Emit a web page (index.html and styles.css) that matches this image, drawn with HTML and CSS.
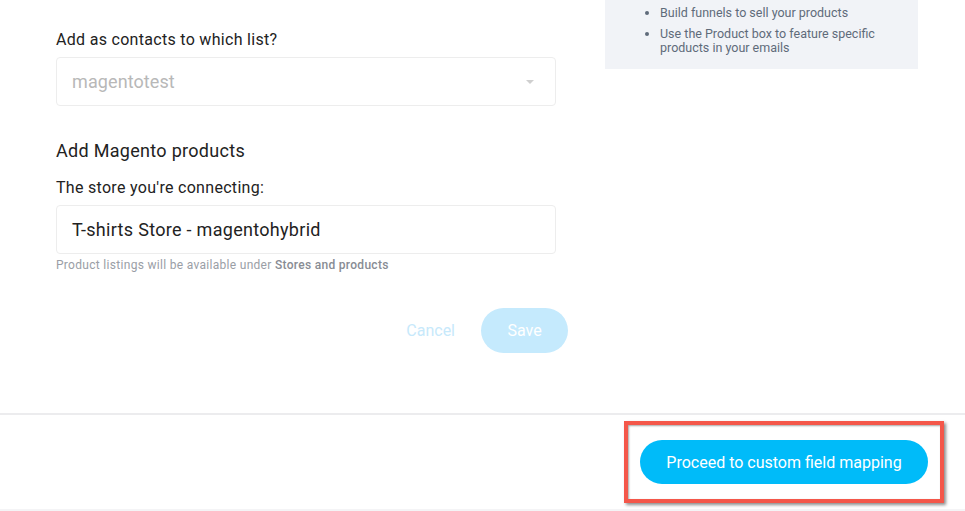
FILE: index.html
```html
<!DOCTYPE html>
<html lang="en">
<head>
<meta charset="UTF-8">
<title>Magento integration</title>
<link rel="stylesheet" href="styles.css">
</head>
<body>
<div class="page">
    <div class="main">
        <div class="form-col">
            <label class="field-label">Add as contacts to which list?</label>
            <div class="select-box">
                <span class="select-value">magentotest</span>
                <span class="caret"></span>
            </div>

            <h3 class="section-title">Add Magento products</h3>
            <label class="field-label">The store you're connecting:</label>
            <div class="input-box">T-shirts Store - magentohybrid</div>
            <p class="hint">Product listings will be available under <b>Stores and products</b></p>

            <div class="actions">
                <button class="btn-cancel">Cancel</button>
                <button class="btn-save">Save</button>
            </div>
        </div>

        <div class="side-col">
            <div class="info-box">
                <ul>
                    <li>Build funnels to sell your products</li>
                    <li>Use the Product box to feature specific products in your emails</li>
                </ul>
            </div>
        </div>
    </div>

    <div class="footer">
        <div class="highlight">
            <button class="btn-proceed">Proceed to custom field mapping</button>
        </div>
    </div>
</div>
</body>
</html>
```

FILE: styles.css
```css
body {
    margin: 0;
    padding: 0;
    font-family: Roboto, 'Liberation Sans', sans-serif;
    background-color: #fff;
    color: #222;
}

.page {
    height: 511px;
    display: flex;
    flex-direction: column;
    border-bottom: 2px solid #f4f4f6;
    box-sizing: border-box;
}

.main {
    display: flex;
    height: 413px;
    border-bottom: 2px solid #ececee;
}

.form-col {
    width: 500px;
    margin-left: 56px;
    padding-top: 31px;
    letter-spacing: 0.3px;
}

.field-label {
    display: block;
    font-size: 16px;
    line-height: 18px;
    margin-bottom: 8px;
    color: #222;
}

.select-box,
.input-box {
    height: 49px;
    border: 1px solid #ededed;
    border-radius: 4px;
    box-sizing: border-box;
    display: flex;
    align-items: center;
    padding: 0 15px;
    font-size: 18px;
}

.select-box {
    justify-content: space-between;
}

.select-value {
    color: #b8b8b8;
    letter-spacing: 0.1px;
}

.caret {
    width: 0;
    height: 0;
    border-left: 4px solid transparent;
    border-right: 4px solid transparent;
    border-top: 4px solid #cfcfcf;
    margin-right: 6px;
}

.section-title {
    font-size: 18px;
    font-weight: 400;
    line-height: 22px;
    margin: 34px 0 17px;
    color: #222;
}

.input-box {
    color: #222;
}

.hint {
    font-size: 12px;
    color: #9a9ea6;
    margin: 4px 0 0;
    line-height: 14px;
}

.hint b {
    font-weight: 500;
    color: #888c94;
}

.actions {
    display: flex;
    justify-content: flex-end;
    align-items: center;
    margin-top: 36px;
    margin-right: -12px;
    gap: 26px;
    letter-spacing: 0;
}

.btn-cancel {
    background: none;
    border: none;
    font-family: inherit;
    font-size: 16px;
    color: #c7e9fb;
    padding: 0;
}

.btn-save {
    width: 87px;
    height: 45px;
    border: none;
    border-radius: 23px;
    background-color: #c5eafd;
    color: #fff;
    font-family: inherit;
    font-size: 16px;
}

.side-col {
    margin-left: 49px;
}

.info-box {
    width: 313px;
    height: 69px;
    background-color: #f1f3f7;
    box-sizing: border-box;
    padding-top: 6px;
}

.info-box ul {
    margin: 0;
    padding-left: 55px;
    font-size: 12.5px;
    line-height: 14px;
    color: #5f6b7a;
}

.info-box li {
    margin-bottom: 7px;
    padding-right: 40px;
}

.footer {
    display: flex;
    justify-content: flex-end;
    padding-top: 6px;
    padding-right: 21px;
}

.highlight {
    border: 4px solid #f4574a;
    padding: 15px 12px;
    background: #fff;
    box-shadow: 2px 2px 3px rgba(0, 0, 0, 0.45), inset 1px 1px 2px rgba(0, 0, 0, 0.35);
}

.btn-proceed {
    width: 288px;
    height: 44px;
    border: none;
    border-radius: 22px;
    background-color: #00bbf9;
    color: #fff;
    font-family: inherit;
    font-size: 16px;
}
```
